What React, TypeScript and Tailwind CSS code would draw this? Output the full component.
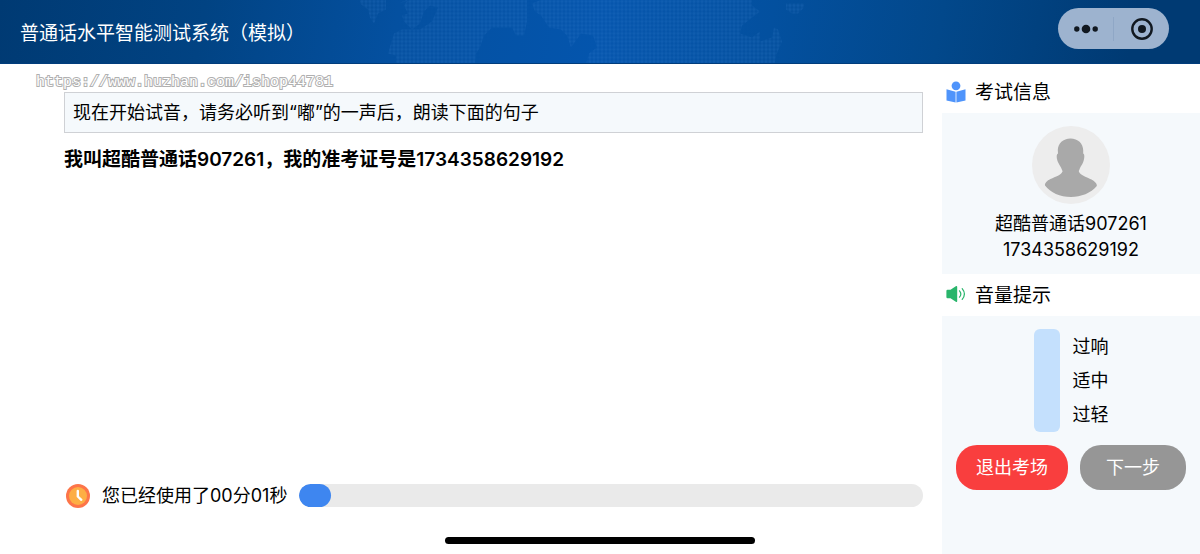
import React, { useState } from 'react';

const candidate = {
  name: '超酷普通话907261',
  ticket: '1734358629192',
};

const volumeLevels = ['过响', '适中', '过轻'];

const HeaderMap: React.FC = () => (
  <svg className="absolute inset-0 w-full h-full" viewBox="0 0 1200 64" preserveAspectRatio="xMidYMid slice" aria-hidden="true">
    <defs>
      <pattern id="dots" width="4" height="4" patternUnits="userSpaceOnUse">
        <rect x="0.5" y="0.5" width="3" height="3" rx="0.8" fill="#4a8fdc" fillOpacity="0.17" />
      </pattern>
    </defs>
    <g fill="url(#dots)">
      <path d="M360 0h26v10l-8 4-4 10-4-6-2-8-8-6z" />
      <path d="M398 4l14-4h115v22l-3 14h-8l-4-8h-20l-8 8-4 12-4 6-1 10h-79v-8l-8-2 6-20 8-4h18l12-8 6-14-8-2-6 6-4 12-8 6-8-8-2-6 6-2-4-8 4-6z" />
      <path d="M532 4l10-4h210v6l8 6-8 6-10 8-2 8 12 4 8-6v10l12-4 2-10 4 2 4 12-6 14-2 12H585l4-14 8-6-4-12-12-2-10 14-4-12-6-6-12-2-8-12-6-4z" />
      <path d="M786 4h18v4l-6 6h-6l-6-4z" />
    </g>
  </svg>
);

const BookIcon: React.FC = () => (
  <svg className="w-5 h-6 shrink-0" viewBox="0 0 20 24" fill="#4f94fb" aria-hidden="true">
    <circle cx="10" cy="4.8" r="4.4" />
    <path d="M0.5 8.2 9.6 10.8V21.4L0.5 19.600zM19.500 8.200 10.400 10.800V21.400L19.500 19.600z" />
  </svg>
);

const SpeakerIcon: React.FC = () => (
  <svg className="w-5 h-6 shrink-0" viewBox="0 0 20 24" fill="none" aria-hidden="true">
    <path d="M1.500 6.800H4.500L9.800 3.200q1.400-.8 1.400.8V18q0 1.600-1.400.8L4.500 15.200H1.500Q.4 15.200.4 14V8Q.4 6.800 1.500 6.800z" fill="#29b56b" />
    <path d="M13.500 7.800q2.700 3.200 0 6.400M16.200 5.600q4.400 5.400 0 10.800" stroke="#29b56b" strokeWidth="1.200" strokeLinecap="round" />
  </svg>
);

const Avatar: React.FC = () => (
  <svg className="w-[78px] h-[78px]" viewBox="0 0 78 78" role="img" aria-label={candidate.name}>
    <circle cx="39" cy="39" r="39" fill="#ededed" />
    <path
      d="M38.500 12.500C46 12.500 51 17.500 51.200 24V27.500C53 28 52.500 33 51 36.500C50.200 38.500 49 40 48 42C47.500 43.500 47 44.500 46.800 45.200C48 49.500 55 51 59.500 53.500C63 55.500 65.300 58 64.800 60C59 67 49 71 39 71C28 71 18.500 66.500 13 59.500C12.500 57.500 15 54.500 18.500 53C23.500 50.500 29.500 49 30.600 45.200C30.200 44 29.500 43 29 41.500C28 39.500 27 38.500 26.200 36.500C24.600 33 24 28.500 26 27.500L25.800 24C26 17.500 31 12.500 38.500 12.500Z"
      fill="#a9a9a9"
    />
  </svg>
);

const ClockIcon: React.FC = () => (
  <svg className="w-6 h-6 shrink-0" viewBox="0 0 24 24" aria-hidden="true">
    <circle cx="12" cy="12" r="12" fill="#fd7549" />
    <circle cx="12" cy="12" r="9" fill="#fdae44" />
    <path d="M11.800 7V12.500L15.300 15.800" fill="none" stroke="#fff" strokeWidth="2.400" strokeLinecap="round" strokeLinejoin="round" />
  </svg>
);

const App: React.FC = () => {
  const [seconds] = useState(1);
  const progress = 5;

  const mm = String(Math.floor(seconds / 60)).padStart(2, '0');
  const ss = String(seconds % 60).padStart(2, '0');

  return (
    <div lang="zh-CN" className="relative min-h-screen flex flex-col bg-white text-black text-[18px] font-['Inter','Noto_Sans_CJK_SC',sans-serif]">
      <header className="relative h-16 flex items-start justify-between pt-2 pl-5 pr-[31px] bg-[linear-gradient(100deg,#003a73_0%,#014383_17%,#0450a0_33%,#0455ad_50%,#03509f_64%,#02488b_78%,#003a73_94%)] border-b border-[#013d7c]">
        <HeaderMap />
        <h1 className="relative mt-2 text-[19px] leading-9 text-white">普通话水平智能测试系统（模拟）</h1>
        <div className="relative h-[41px] w-[111px] flex items-center rounded-full bg-[#9db3cf]">
          <button aria-label="更多" className="flex-1 h-full flex items-center justify-center">
            <svg className="w-6 h-3" viewBox="0 0 24 12" fill="#111820">
              <circle cx="2.800" cy="6" r="2.700" />
              <circle cx="12" cy="6" r="4.300" />
              <circle cx="21.200" cy="6" r="2.700" />
            </svg>
          </button>
          <span className="w-px h-6 bg-[#8fa7c6]" />
          <button aria-label="关闭" className="flex-1 h-full flex items-center justify-center">
            <svg className="w-6 h-6" viewBox="0 0 24 24">
              <circle cx="12" cy="12" r="9.700" fill="none" stroke="#111820" strokeWidth="2.400" />
              <circle cx="12" cy="12" r="4" fill="#111820" />
            </svg>
          </button>
        </div>
      </header>

      <div className="flex-1 flex">
        <main className="flex-1 min-w-0 flex flex-col pl-16 pr-[19px]">
          <p className="-ml-7 h-7 pt-2 text-[15px] leading-[22px] whitespace-nowrap text-white font-['Liberation_Mono',monospace] [-webkit-text-stroke:2px_#b0b0b0] [paint-order:stroke_fill]">
            https://www.huzhan.com/ishop44781
          </p>
          <p className="h-[41px] flex items-center px-2 border border-[#cfd1d5] bg-[#f5f9fc]">
            现在开始试音，请务必听到“嘟”的一声后，朗读下面的句子
          </p>
          <p className="mt-[11px] text-[19px] leading-8 font-semibold">
            我叫{candidate.name}，我的准考证号是{candidate.ticket}
          </p>

          <div className="mt-auto mb-[45px] flex items-center pl-0.5">
            <ClockIcon />
            <label htmlFor="used" className="ml-3 whitespace-nowrap">您已经使用了{mm}分{ss}秒</label>
            <div id="used" role="progressbar" aria-valuenow={progress} className="ml-3 flex-1 h-[23px] rounded-full bg-[#eaeaea] overflow-hidden">
              <div className="h-full rounded-full bg-[#3e86f0]" style={{ width: `${progress}%` }} />
            </div>
          </div>
        </main>

        <aside className="w-[258px] shrink-0 flex flex-col">
          <h2 className="h-[49px] pt-2 flex items-center gap-[9px] pl-1 text-[19px]">
            <BookIcon />
            <span className="pt-0.5">考试信息</span>
          </h2>
          <section className="h-[161px] pt-[13px] flex flex-col items-center bg-[#f5f9fc]">
            <Avatar />
            <p className="mt-[7px] leading-[26px]">{candidate.name}</p>
            <p className="leading-[26px]">{candidate.ticket}</p>
          </section>
          <h2 className="h-[42px] flex items-center gap-[9px] pl-1 text-[19px]">
            <SpeakerIcon />
            <span className="pt-0.5">音量提示</span>
          </h2>
          <section className="flex-1 pt-[13px] px-[14px] bg-[#f5f9fc]">
            <div className="flex justify-center gap-[13px]">
              <div className="w-[26px] rounded-md bg-[#c4e0fd]" />
              <ul className="pt-px">
                {volumeLevels.map((level) => (
                  <li key={level} className="leading-[34px]">{level}</li>
                ))}
              </ul>
            </div>
            <div className="mt-[13px] flex gap-3">
              <button className="w-[112px] h-[45px] rounded-[21px] bg-[#f93e3e] text-white">退出考场</button>
              <button className="flex-1 h-[45px] rounded-[21px] bg-[#969696] text-white">下一步</button>
            </div>
          </section>
        </aside>
      </div>

      <div className="absolute bottom-[10px] left-1/2 -translate-x-1/2 w-[310px] h-[7px] rounded-full bg-black" />
    </div>
  );
};

export default App;
